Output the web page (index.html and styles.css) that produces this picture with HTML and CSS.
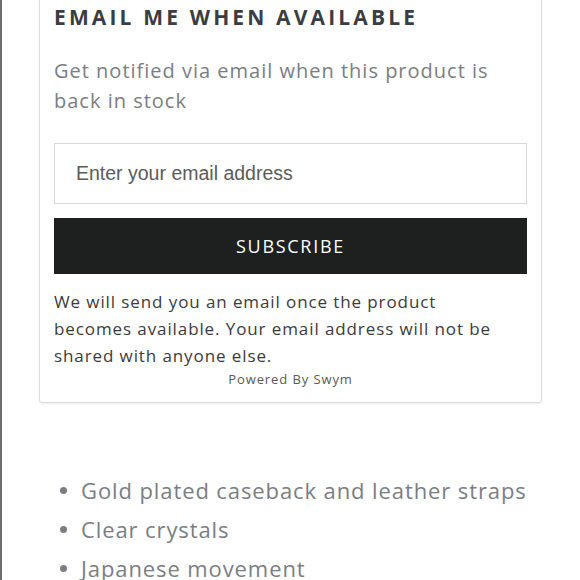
FILE: index.html
```html
<!DOCTYPE html>
<html>
<head>
<meta charset="utf-8">
<link rel="stylesheet" href="styles.css">
</head>
<body>
<div class="page">
  <div class="card">
    <h2 class="title">EMAIL ME WHEN AVAILABLE</h2>
    <p class="subtitle">Get notified via email when this product is back in stock</p>
    <input class="email" type="text" placeholder="Enter your email address">
    <button class="subscribe">SUBSCRIBE</button>
    <p class="note">We will send you an email once the product becomes available. Your email address will not be shared with anyone else.</p>
    <div class="powered">Powered By Swym</div>
  </div>
  <ul class="features">
    <li>Gold plated caseback and leather straps</li>
    <li>Clear crystals</li>
    <li>Japanese movement</li>
  </ul>
</div>
</body>
</html>
```

FILE: styles.css
```css
html, body {
  margin: 0;
  padding: 0;
  background: #fff;
  overflow: hidden;
}
.page {
  display: flow-root;
  height: 580px;
  border-left: 2px solid #6e6e6e;
  box-sizing: border-box;
  font-family: "Open Sans", sans-serif;
}
.card {
  margin: -20px 0 0 37px;
  width: 503px;
  box-sizing: border-box;
  border: 1px solid #dcdcdc;
  border-radius: 3px;
  box-shadow: 0 1px 2px rgba(0,0,0,0.08);
  padding: 20px 14px 13px 14px;
  display: flex;
  flex-direction: column;
}
.title {
  margin: 0 0 22px 0;
  font-size: 21px;
  line-height: 33px;
  font-weight: 700;
  letter-spacing: 3.15px;
  color: #3a3d41;
}
.subtitle {
  margin: 0;
  font-size: 20px;
  line-height: 30px;
  letter-spacing: 1px;
  color: #7a7e84;
  width: 450px;
}
.email {
  margin: 27px 0 0 0;
  height: 61px;
  width: 473px;
  box-sizing: border-box;
  border: 1px solid #d9d9d9;
  border-radius: 0;
  padding: 0 21px;
  font-family: "Liberation Sans", Arial, sans-serif;
  font-size: 19.5px;
  color: #555;
  outline: none;
}
.email::placeholder {
  color: #5b5b5b;
}
.subscribe {
  margin: 14px 0 0 0;
  height: 56px;
  width: 473px;
  border: none;
  border-radius: 0;
  background: #1e1f1f;
  color: #fff;
  font-family: "Open Sans", sans-serif;
  font-size: 18px;
  letter-spacing: 1.7px;
  padding: 0;
}
.note {
  margin: 14px 0 0 0;
  width: 452px;
  font-size: 17px;
  line-height: 27px;
  letter-spacing: 0.9px;
  color: #3b3b3b;
}
.powered {
  text-align: center;
  font-size: 13px;
  line-height: 20px;
  color: #5a5a5a;
  letter-spacing: 0.9px;
}
.features {
  margin: 68px 0 0 0;
  padding: 0 0 0 79px;
  list-style: none;
}
.features li {
  position: relative;
  font-size: 22px;
  line-height: 39px;
  letter-spacing: 0.9px;
  color: #7a7e84;
}
.features li::before {
  content: "";
  position: absolute;
  left: -21px;
  top: 16px;
  width: 7px;
  height: 7px;
  border-radius: 50%;
  background: #7a7e84;
}
```
